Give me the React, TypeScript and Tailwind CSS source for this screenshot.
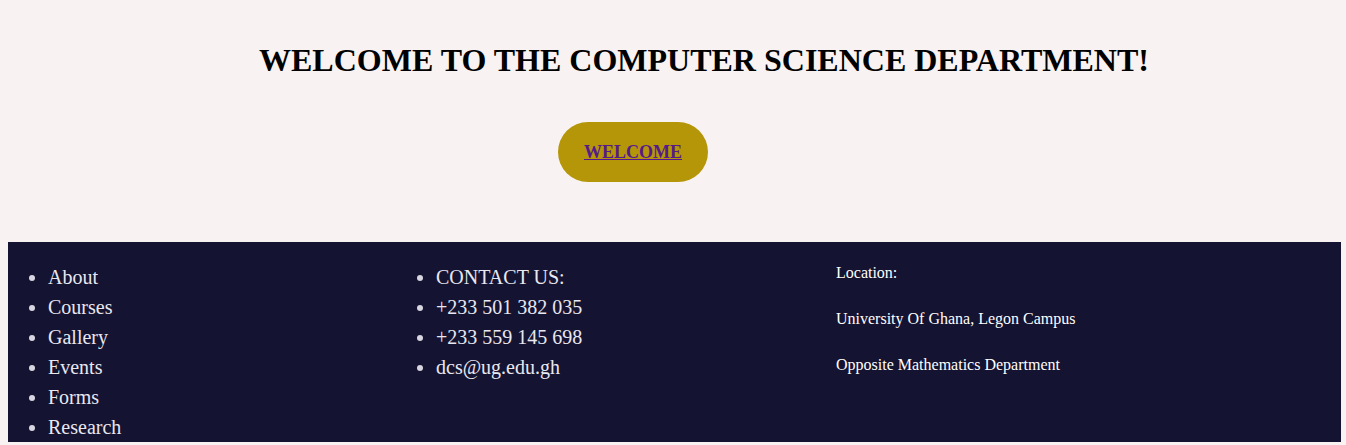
const links = ["About", "Courses", "Gallery", "Events", "Forms", "Research"];
const contacts = ["CONTACT US:", "+233 501 382 035", "+233 559 145 698", "dcs@ug.edu.gh"];

export default function App() {
  return (
    <div className="min-h-[445px] bg-[#f8f2f2] font-['Liberation_Serif',serif]">
      <section className="pt-[42px]">
        <h1 className="pl-[259px] text-[32px] font-bold leading-[36px] text-black">
          WELCOME TO THE COMPUTER SCIENCE DEPARTMENT!
        </h1>
        <div className="mt-[44px] pl-[558px]">
          <a
            href="#"
            className="flex h-[60px] w-[150px] items-center justify-center rounded-full bg-[#b59608] text-[18px] font-bold text-[#551a8b] underline"
          >
            WELCOME
          </a>
        </div>
      </section>

      <footer className="ml-[8px] mt-[60px] flex h-[200px] w-[1333px] overflow-hidden bg-[#141331]">
        <ul className="w-[388px] list-disc pl-[40px] pt-[20px] text-[20px] leading-[30px] text-[#e9e7f0] marker:text-[#d8d6e0]">
          {links.map((l) => (
            <li key={l}>{l}</li>
          ))}
        </ul>
        <ul className="w-[440px] list-disc pl-[40px] pt-[20px] text-[20px] leading-[30px] text-[#e9e7f0] marker:text-[#d8d6e0]">
          {contacts.map((c) => (
            <li key={c}>{c}</li>
          ))}
        </ul>
        <div className="flex flex-col gap-[28px] pt-[22px] text-[16px] leading-[18px] text-white">
          <p>Location:</p>
          <p>University Of Ghana, Legon Campus</p>
          <p>Opposite Mathematics Department</p>
        </div>
      </footer>
    </div>
  );
}
